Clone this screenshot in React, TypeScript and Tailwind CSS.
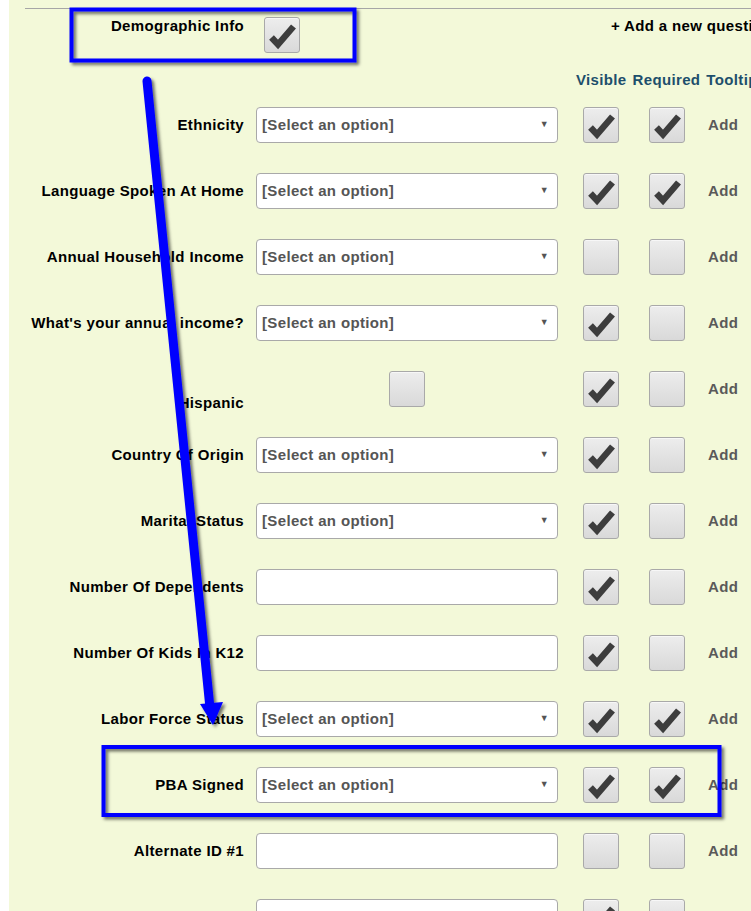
import React from 'react';

type Kind = 'select' | 'text' | 'check';

interface Question {
  label: string;
  kind: Kind;
  visible: boolean;
  required: boolean;
}

const questions: Question[] = [
  { label: 'Ethnicity', kind: 'select', visible: true, required: true },
  { label: 'Language Spoken At Home', kind: 'select', visible: true, required: true },
  { label: 'Annual Household Income', kind: 'select', visible: false, required: false },
  { label: "What's your annual income?", kind: 'select', visible: true, required: false },
  { label: 'Hispanic', kind: 'check', visible: true, required: false },
  { label: 'Country Of Origin', kind: 'select', visible: true, required: false },
  { label: 'Marital Status', kind: 'select', visible: true, required: false },
  { label: 'Number Of Dependents', kind: 'text', visible: true, required: false },
  { label: 'Number Of Kids In K12', kind: 'text', visible: true, required: false },
  { label: 'Labor Force Status', kind: 'select', visible: true, required: true },
  { label: 'PBA Signed', kind: 'select', visible: true, required: true },
  { label: 'Alternate ID #1', kind: 'text', visible: false, required: false },
  // last row is cut off by the bottom edge, only its controls peek in
  { label: '', kind: 'text', visible: true, required: false },
];

const CheckBox: React.FC<{ checked: boolean }> = ({ checked }) => (
  <div className="w-[36px] h-[36px] shrink-0 rounded-[3px] border border-[#a9a9a9] bg-gradient-to-b from-[#ededed] to-[#d9d9d9] shadow-[inset_0_1px_0_#f7f7f7]">
    {checked && (
      <svg width="34" height="34" viewBox="0 0 34 34">
        <polyline
          points="6.5,19.5 13,26.5 28.5,8.5"
          fill="none"
          stroke="#3d3d3d"
          strokeWidth="6.5"
          strokeLinejoin="miter"
          strokeLinecap="butt"
        />
      </svg>
    )}
  </div>
);

const Field: React.FC<{ kind: Kind }> = ({ kind }) => {
  if (kind === 'check') {
    return (
      <div className="w-[302px] h-[36px] flex justify-center">
        <CheckBox checked={false} />
      </div>
    );
  }
  return (
    <div className="w-[302px] h-[36px] rounded-[4px] border border-[#a9a9a9] bg-white flex items-center pl-[5px] pr-[8px]">
      {kind === 'select' && (
        <>
          <span className="text-[#555] font-bold">[Select an option]</span>
          <span className="ml-auto text-[9px] text-[#555]">▼</span>
        </>
      )}
    </div>
  );
};

const Annotations: React.FC = () => (
  <svg className="absolute inset-0 pointer-events-none" width="751" height="911" viewBox="0 0 751 911">
    <defs>
      <filter id="shade" x="-20%" y="-20%" width="140%" height="140%">
        <feDropShadow dx="2.5" dy="2.5" stdDeviation="1.5" floodColor="#000" floodOpacity="0.55" />
      </filter>
    </defs>
    <g filter="url(#shade)">
      <rect x="71.5" y="9.5" width="283" height="51" fill="none" stroke="#0000ff" strokeWidth="4" />
      <rect x="103.5" y="747" width="616" height="68" fill="none" stroke="#0000ff" strokeWidth="4" />
      <line x1="147" y1="81" x2="210" y2="708" stroke="#0000ff" strokeWidth="9" strokeLinecap="round" />
      <polygon points="200,704 223,702 213,725" fill="#0000ff" />
    </g>
  </svg>
);

export default function App() {
  return (
    <div className="relative w-[751px] h-[911px] overflow-hidden bg-white font-['Liberation_Sans',Arial,sans-serif] text-[15px] tracking-[0.35px]">
      <div className="ml-[9px] h-full bg-[#f3f9d9] pt-[8px]">
        <div className="ml-[16px] h-px bg-[#a6a6a6]" />

        <div className="flex items-start mt-[8px] whitespace-nowrap">
          <div className="w-[235px] shrink-0 text-right font-bold text-black leading-[18px]">Demographic Info</div>
          <div className="ml-[20px] shrink-0">
            <CheckBox checked={true} />
          </div>
          <div className="ml-[311px] shrink-0 font-bold text-black leading-[18px]">+ Add a new question</div>
        </div>

        <div className="flex mt-[18px] ml-[567px] gap-[6px] font-bold text-[#1d4f6c] leading-[18px] whitespace-nowrap">
          <span className="shrink-0">Visible</span>
          <span className="shrink-0">Required</span>
          <span className="shrink-0">Tooltip</span>
        </div>

        <div className="mt-[18px]">
          {questions.map((q, i) => (
            <div key={i} className="flex items-center h-[36px] mb-[30px] whitespace-nowrap">
              <div
                className={`w-[235px] shrink-0 text-right font-bold text-black leading-[18px] ${
                  q.kind === 'check' ? 'self-start pt-[23px]' : ''
                }`}
              >
                {q.label}
              </div>
              <div className="ml-[12px] shrink-0">
                <Field kind={q.kind} />
              </div>
              <div className="ml-[25px] shrink-0">
                <CheckBox checked={q.visible} />
              </div>
              <div className="ml-[30px] shrink-0">
                <CheckBox checked={q.required} />
              </div>
              {q.label && <div className="ml-[23px] shrink-0 font-bold text-[#5a5a5a]">Add</div>}
            </div>
          ))}
        </div>
      </div>
      <Annotations />
    </div>
  );
}
